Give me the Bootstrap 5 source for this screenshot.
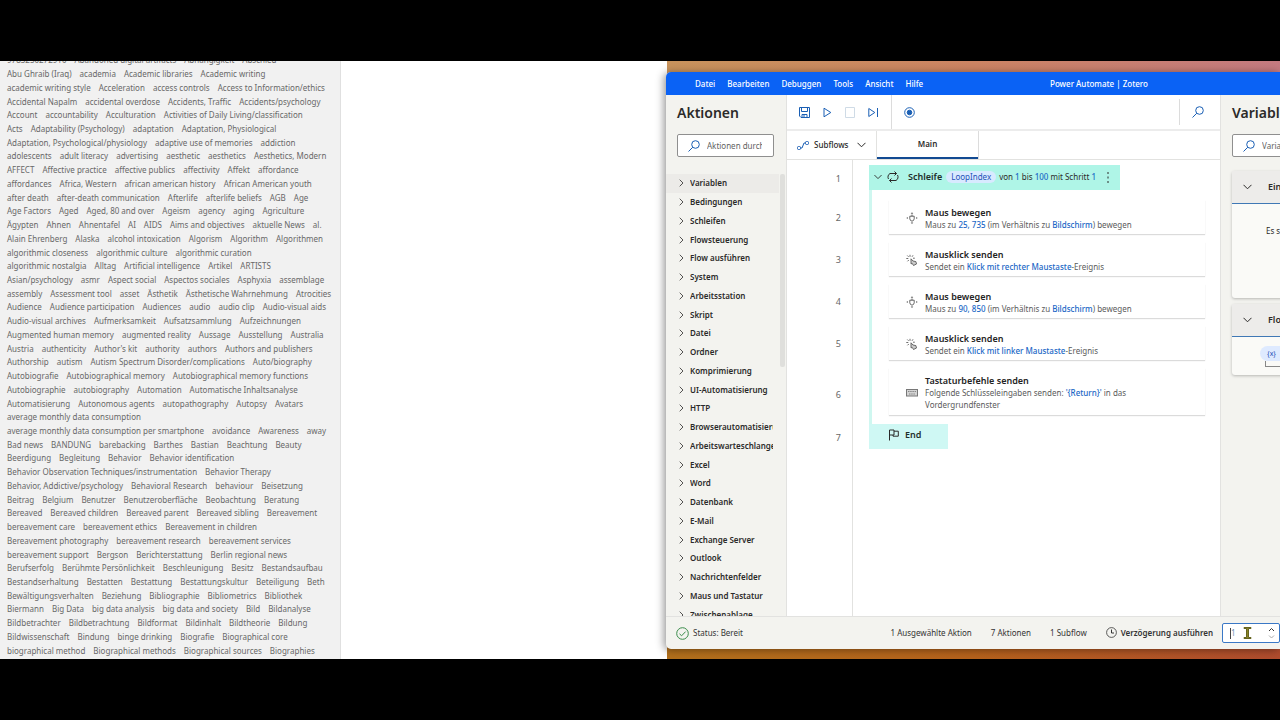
<!DOCTYPE html>
<html lang="de">
<head>
<meta charset="utf-8">
<meta name="viewport" content="width=device-width, initial-scale=1">
<title>Power Automate | Zotero</title>
<link href="https://cdn.jsdelivr.net/npm/bootstrap@5.3.0/dist/css/bootstrap.min.css" rel="stylesheet">
<style>
  :root { --ink: #2b2a29; --blue: #1a5fb4; --pane: #f3f3ef; --rule: #e2e2e0; }
  body { background: #000; font-family: "Noto Sans", "Open Sans", sans-serif; font-size: 8px; line-height: 12px; color: var(--ink); }
  svg { display: block; flex: none; fill: none; stroke: currentColor; }
  button { color: inherit; }
  .plain { border: 0; background: none; padding: 0; text-align: left; }
  .screen { height: 100vh; padding: 61px 0; }
  .semi { font-weight: 600; }
  .plain.ic, .ic { color: var(--blue); }

  /* Zotero tag selector */
  .tags-pane { flex: 0 0 341px; background: #f1f1f1; border-right: 1px solid #e0e0e0; color: #686868; }
  .tags { display: grid; grid-auto-rows: 1fr; margin: -8px 0 2px; padding-left: 7px; line-height: 13px; }
  .tags li { display: flex; gap: 8px; align-items: center; min-height: 0; white-space: nowrap; }
  .blank-pane { flex: 0 0 326px; }

  /* Desktop and flow designer window */
  .desk { background: linear-gradient(90deg, #c8935c, #cc8463 50%, #c47a80) top / 100% 50% no-repeat, linear-gradient(90deg, #b2701c, #b6621c 50%, #b04c2e) bottom / 100% 50% no-repeat; padding: 11px 0 10px; min-width: 0; }
  .win { margin-left: -1px; border-radius: 5px 0 0 5px; background: var(--pane); box-shadow: -2px 1px 9px rgba(0,0,0,.42); overflow: hidden; }
  .menubar { height: 23px; background: #0a62f5; color: #fff; font-weight: 500; display: grid; grid-template-columns: 1fr 96px 134px; align-items: center; padding-left: 29px; }
  .menubar nav { gap: 12px; }
  .menubar a { color: #fff; text-decoration: none; }
  .actions { flex: 0 0 121px; min-width: 0; border-right: 1px solid var(--rule); }
  .actions-top { padding: 0 12px 0 11px; }
  .pane-title { font-size: 14px; line-height: 20px; font-weight: 600; margin: 8px 0 0; white-space: nowrap; }
  .find { height: 23px; border: 1px solid #8f8f8f; border-radius: 2px; background: #fff; display: flex; align-items: center; gap: 7px; padding: 0 11px 0 10px; margin-top: 11px; }
  .find input { border: 0; outline: 0; background: none; padding: 0; min-width: 0; flex: 1; font-size: 8px; }
  .find input::placeholder { color: #626262; opacity: 1; }
  .tree-wrap { flex: 1 1 0; margin-top: 17px; }
  .tree { flex: 1 1 0; min-width: 0; min-height: 450px; display: grid; grid-template-columns: minmax(0, 1fr); grid-auto-rows: 1fr; font-weight: 600; }
  .tree button { width: 100%; height: 100%; display: flex; align-items: center; gap: 6px; padding: 0 6px 0 13px; font-weight: 600; }
  .tree span { flex: 1; min-width: 0; white-space: nowrap; overflow: hidden; }
  .tree svg { stroke-width: .8; }
  .tree li:first-child { background: #ecebe8; }
  .thumb { width: 5px; height: 193px; margin: 0 1px; border-radius: 2px; background: #dfdfdc; }

  .tools { height: 36px; border-bottom: 2px solid #ececec; display: flex; align-items: stretch; }
  .tool-set { gap: 13px; padding-left: 12px; width: 104px; }
  .tabs-row { height: 29px; border-bottom: 1px solid var(--rule); display: flex; }
  .subflows { width: 90px; border-right: 1px solid var(--rule); display: flex; align-items: center; gap: 5px; padding-left: 10px; font-weight: 500; }
  .main-tab { width: 101px; text-align: center; border-bottom: 2px solid #124a92; font-weight: 600; }
  .vline { width: 1px; background: #dcdcdc; }

  .step { display: flex; }
  .num { flex: 0 0 66px; border-right: 1px solid var(--rule); padding-right: 11px; display: flex; align-items: center; justify-content: flex-end; color: #686868; font-size: 9px; }
  .step-first { height: 37px; }
  .step-body { flex: 1; min-width: 0; margin-left: 16px; }
  .in-loop { border-left: 3px solid #cff7f0; padding: 3px 15px 5px 17px; }
  .step:last-child > .in-loop { padding-bottom: 9px; }
  .loop-head { background: #aff5e7; height: 25px; width: 251px; margin-top: 5px; padding: 0 8px 1px 5px; display: flex; align-items: center; white-space: nowrap; }
  .loop-gap { height: 7px; border-left: 3px solid #cff7f0; }
  .pill { background: #d8eaff; color: #2450b8; border-radius: 7px; padding: 0 5px; margin: 0 3px 0 4px; }
  .val { color: #1b68c6; font-weight: 500; }
  .step-card { min-height: 34px; box-shadow: 0 1px 1px rgba(0,0,0,.14); display: flex; align-items: center; gap: 7px; padding: 6px 12px 4px 17px; color: #5b5b5b; }
  .step-card.one-line { padding-top: 2px; padding-bottom: 0; white-space: nowrap; }
  .step-card h3 { font-size: 9px; line-height: 13px; font-weight: 600; color: #232323; margin: 0; }
  .step-card p { margin: 0; }
  .end-head { background: #cff8f4; width: 79px; height: 25px; display: flex; align-items: center; gap: 6px; padding: 0 0 3px 19px; }
  .name { font-size: 9px; font-weight: 600; color: #1e2f2c; }

  .vars { flex: 0 0 60px; border-left: 1px solid var(--rule); padding-left: 11px; overflow: hidden; }
  .vars-inner { width: 140px; }
  .var-box { border-radius: 3px; box-shadow: 0 1px 3px rgba(0,0,0,.25); background: #fafaf7; }
  .var-head { width: 100%; height: 33px; background: #edecea; border-bottom: 1px solid #3f78b5; display: flex; align-items: center; gap: 16px; padding-left: 11px; font-size: 9px; font-weight: 600; }
  .chip { background: #deeaff; border-radius: 8px; width: 70px; line-height: 15px; padding-left: 7px; color: #2450b8; font-size: 7px; }

  .status { height: 33px; border-top: 1px solid var(--rule); display: flex; align-items: center; white-space: nowrap; padding-left: 10px; color: #343434; }
  .status-counts { gap: 19px; }
  .delay { position: relative; width: 58px; height: 20px; border: 1px solid #3a78c6; border-radius: 2px; background: #fff; display: flex; align-items: center; justify-content: space-between; padding: 0 4px 0 7px; margin-left: 9px; }
  .delay input { border: 0; border-left: 1px solid #444; outline: 0; padding: 0; width: 14px; height: 11px; font-size: 8px; color: #6b8fb5; }
  .ibeam { position: absolute; left: 19px; top: 2px; }
</style>
</head>
<body>
<svg class="d-none">
  <symbol id="lens" viewBox="0 0 12 12"><circle cx="7.5" cy="4.5" r="3.8"/><path d="M4.8 7.2 0.5 11.5"/></symbol>
  <symbol id="right" viewBox="0 0 5 8"><path d="M.7 .7 4 4 .7 7.3"/></symbol>
  <symbol id="down" viewBox="0 0 9 6"><path d="M.5 .8 4.5 4.8 8.5 .8"/></symbol>
  <symbol id="move" viewBox="0 0 12 12"><path d="M3.800 4.200h4.400v2.600Q8 8.800 6 9.200 4 8.800 3.800 6.800zM6 2.500v1.700" stroke="#555"/><path d="M6 .3 7.300 1.800H4.700zM6 11.900 7.300 10.400H4.700zM.3 6 1.800 4.900v2.200zM11.700 6 10.200 4.900v2.200z" fill="currentColor" stroke="none"/></symbol>
  <symbol id="click" viewBox="0 0 12 12"><path d="M5 4.800v5l1.300-.3L7.500 11.500l3-1.500-.6-2.400L7 7z" fill="#ccc"/><path d="M4 .8v2M1.300 1.500 2.600 2.800M7 1.300 6 2.800M.3 4.500h2M2.800 6 1.500 7.300M7 4.200h1.800"/></symbol>
</svg>

<div class="screen d-flex overflow-hidden">
  <section class="tags-pane d-flex flex-column overflow-hidden">
    <ul class="tags list-unstyled flex-grow-1" id="tags"></ul>
  </section>
  <section class="blank-pane bg-white"></section>

  <main class="desk flex-grow-1 d-flex flex-column">
    <div class="win flex-grow-1 d-flex flex-column">
      <header class="menubar">
        <nav class="d-flex"><a href="#">Datei</a><a href="#">Bearbeiten</a><a href="#">Debuggen</a><a href="#">Tools</a><a href="#">Ansicht</a><a href="#">Hilfe</a></nav>
        <span class="text-nowrap">Power Automate | Zotero</span>
      </header>

      <div class="d-flex flex-grow-1 overflow-hidden">
        <aside class="actions d-flex flex-column">
          <div class="actions-top">
            <h1 class="pane-title">Aktionen</h1>
            <label class="find"><svg class="ic" width="12" height="12"><use href="#lens"/></svg><input type="text" placeholder="Aktionen durchsuchen" aria-label="Aktionen durchsuchen"></label>
          </div>
          <div class="tree-wrap d-flex overflow-hidden">
            <ul class="tree list-unstyled mb-0 align-self-start" id="tree"></ul>
            <div class="thumb"></div>
          </div>
        </aside>

        <section class="flex-grow-1 bg-white overflow-hidden d-flex flex-column">
          <div class="tools">
            <div class="tool-set d-flex align-items-center">
              <button class="plain ic" aria-label="Speichern"><svg width="11" height="11" viewBox="0 0 11 11"><path d="M.5.5h10v10H2L.5 9zM2.500.5v4h6v-4M3 10.500v-3h5v3M5 8v2"/></svg></button>
              <button class="plain ic" aria-label="Ausführen"><svg width="9" height="11" viewBox="0 0 9 11"><path d="M1 1.200 7.800 5.500 1 9.800z"/></svg></button>
              <button class="plain" style="color:#cfdbe6" aria-label="Anhalten"><svg width="10" height="11" viewBox="0 0 10 11"><path d="M.5.5h9v10h-9z"/></svg></button>
              <button class="plain ic" aria-label="Nächste Aktion"><svg width="10" height="11" viewBox="0 0 10 11"><path d="M.8 1.500 6.800 5.500l-6 4zM9.500 1v9"/></svg></button>
            </div>
            <div class="vline"></div>
            <button class="plain ic ps-2 ms-1" aria-label="Rekorder"><svg width="11" height="11" viewBox="0 0 11 11"><circle cx="5.500" cy="5.500" r="4.800"/><circle cx="5.500" cy="5.500" r="2.300" fill="currentColor"/></svg></button>
            <div class="vline ms-auto my-1"></div>
            <button class="plain ic ps-2 pe-3 ms-1" aria-label="Suchen"><svg width="12" height="12"><use href="#lens"/></svg></button>
          </div>
          <div class="tabs-row">
            <button class="plain subflows"><svg class="ic" width="12" height="9" viewBox="0 0 12 9"><rect x=".5" y="5.500" width="3" height="3" rx="1"/><rect x="8.500" y=".5" width="3" height="3" rx="1"/><path d="M3.500 7h1.500L7 2h1.500"/></svg>Subflows<svg class="ms-1" width="9" height="6"><use href="#down"/></svg></button>
            <button class="plain main-tab">Main</button>
            <div class="vline"></div>
          </div>

          <div class="flex-grow-1 d-flex flex-column">
            <div class="step step-first"><div class="num">1</div>
              <div class="step-body">
                <div class="loop-head"><svg width="8" height="6"><use href="#down"/></svg><svg class="ms-1 me-1" width="14" height="12" viewBox="0 0 14 12"><path d="M2.500 8A4 4 0 0 1 4 2.500h6.500M8.500.5l2 2-2 2M11.500 4a4 4 0 0 1-1.500 5.500H3.500M5.500 7.500l-2 2 2 2"/></svg><span class="name ps-1">Schleife</span><span class="pill">LoopIndex</span><span>von <a class="val text-decoration-none" href="#">1</a> bis <a class="val text-decoration-none" href="#">100</a> mit Schritt <a class="val text-decoration-none" href="#">1</a></span><button class="plain ms-auto" aria-label="Mehr"><svg width="8" height="12" viewBox="0 0 8 12"><path d="M4 1v2M4 5.500v2M4 10v2"/></svg></button></div>
                <div class="loop-gap"></div></div></div>
            <div id="steps"></div>
            <div class="step flex-grow-1"><div class="num align-items-start pt-2">7</div>
              <div class="step-body"><div class="end-head"><svg width="11" height="12" viewBox="0 0 11 12"><path d="M1.500 11.500V1h4.500v5H1.500M6 2.200h4.300v5H5V6"/></svg><span class="name">End</span></div></div></div>
          </div>
        </section>

        <aside class="vars">
          <div class="vars-inner">
            <h2 class="pane-title">Variablen</h2>
            <label class="find"><svg class="ic" width="12" height="12"><use href="#lens"/></svg><input type="text" placeholder="Variablen durchsuchen" aria-label="Variablen durchsuchen"></label>
            <div class="var-box" style="margin-top:14px">
              <button class="plain var-head"><svg width="9" height="6"><use href="#down"/></svg>Ein-/Ausgabevariablen</button>
              <div class="text-nowrap" style="height:94px;padding:21px 0 0 34px">Es sind keine vorhanden</div>
            </div>
            <div class="var-box" style="margin-top:6px">
              <button class="plain var-head"><svg width="9" height="6"><use href="#down"/></svg>Flowvariablen</button>
              <div class="pb-2" style="padding:9px 0 0 28px"><div class="chip">{x}</div><div style="height:6px;margin:0 10px 0 5px;border:solid #888;border-width:0 0 1px 1px"></div></div>
            </div>
          </div>
        </aside>
      </div>

      <footer class="status">
        <svg width="13" height="13" viewBox="0 0 13 13" style="color:#3a8c4a"><circle cx="6.500" cy="6.500" r="5.800"/><path d="M3.500 6.800 5.600 8.800 9.600 4.600"/></svg>
        <span class="ms-1">Status: Bereit</span>
        <div class="status-counts d-flex ms-auto"><span>1 Ausgewählte Aktion</span><span>7 Aktionen</span><span>1 Subflow</span><svg width="11" height="11" viewBox="0 0 11 11"><circle cx="5.500" cy="5.500" r="4.900" stroke-width=".8"/><path d="M5.500 2.500v3.500h2.500"/></svg></div>
        <label class="semi ps-1" for="delay">Verzögerung ausführen</label>
        <div class="delay">
          <input id="delay" type="text" value="1">
          <svg width="7" height="12" viewBox="0 0 7 12"><path d="M1 4 3.500 1.500 6 4"/><path d="M1 8.500 3.500 11 6 8.500" stroke="#aaa"/></svg>
          <svg class="ibeam" width="11" height="14" viewBox="0 0 11 14"><path d="M2 1.500h7v1H6.500v9H9v1H2v-1h2.500v-9H2z" fill="#8a8426" stroke="#66641f"/></svg>
        </div>
      </footer>
    </div>
  </main>
</div>

<script>
const tagRows = `9783250272910|Abandoned digital artifacts|Abhängigkeit|Abschied
Abu Ghraib (Iraq)|academia|Academic libraries|Academic writing
academic writing style|Acceleration|access controls|Access to Information/ethics
Accidental Napalm|accidental overdose|Accidents, Traffic|Accidents/psychology
Account|accountability|Acculturation|Activities of Daily Living/classification
Acts|Adaptability (Psychology)|adaptation|Adaptation, Physiological
Adaptation, Psychological/physiology|adaptive use of memories|addiction
adolescents|adult literacy|advertising|aesthetic|aesthetics|Aesthetics, Modern
AFFECT|Affective practice|affective publics|affectivity|Affekt|affordance
affordances|Africa, Western|african american history|African American youth
after death|after-death communication|Afterlife|afterlife beliefs|AGB|Age
Age Factors|Aged|Aged, 80 and over|Ageism|agency|aging|Agriculture
Ägypten|Ahnen|Ahnentafel|AI|AIDS|Aims and objectives|aktuelle News|al.
Alain Ehrenberg|Alaska|alcohol intoxication|Algorism|Algorithm|Algorithmen
algorithmic closeness|algorithmic culture|algorithmic curation
algorithmic nostalgia|Alltag|Artificial intelligence|Artikel|ARTISTS
Asian/psychology|asmr|Aspect social|Aspectos sociales|Asphyxia|assemblage
assembly|Assessment tool|asset|Ästhetik|Ästhetische Wahrnehmung|Atrocities
Audience|Audience participation|Audiences|audio|audio clip|Audio-visual aids
Audio-visual archives|Aufmerksamkeit|Aufsatzsammlung|Aufzeichnungen
Augmented human memory|augmented reality|Aussage|Ausstellung|Australia
Austria|authenticity|Author's kit|authority|authors|Authors and publishers
Authorship|autism|Autism Spectrum Disorder/complications|Auto/biography
Autobiografie|Autobiographical memory|Autobiographical memory functions
Autobiographie|autobiography|Automation|Automatische Inhaltsanalyse
Automatisierung|Autonomous agents|autopathography|Autopsy|Avatars
average monthly data consumption
average monthly data consumption per smartphone|avoidance|Awareness|away
Bad news|BANDUNG|barebacking|Barthes|Bastian|Beachtung|Beauty
Beerdigung|Begleitung|Behavior|Behavior identification
Behavior Observation Techniques/instrumentation|Behavior Therapy
Behavior, Addictive/psychology|Behavioral Research|behaviour|Beisetzung
Beitrag|Belgium|Benutzer|Benutzeroberfläche|Beobachtung|Beratung
Bereaved|Bereaved children|Bereaved parent|Bereaved sibling|Bereavement
bereavement care|bereavement ethics|Bereavement in children
Bereavement photography|bereavement research|bereavement services
bereavement support|Bergson|Berichterstattung|Berlin regional news
Berufserfolg|Berühmte Persönlichkeit|Beschleunigung|Besitz|Bestandsaufbau
Bestandserhaltung|Bestatten|Bestattung|Bestattungskultur|Beteiligung|Beth
Bewältigungsverhalten|Beziehung|Bibliographie|Bibliometrics|Bibliothek
Biermann|Big Data|big data analysis|big data and society|Bild|Bildanalyse
Bildbetrachter|Bildbetrachtung|Bildformat|Bildinhalt|Bildtheorie|Bildung
Bildwissenschaft|Bindung|binge drinking|Biografie|Biographical core
biographical method|Biographical methods|Biographical sources|Biographies`;
document.getElementById('tags').innerHTML = tagRows.split('\n').map(r =>
  '<li>' + r.split('|').map(t => `<button class="plain">${t}</button>`).join('') + '</li>').join('');

const groups = ['Variablen','Bedingungen','Schleifen','Flowsteuerung','Flow ausführen','System','Arbeitsstation','Skript','Datei','Ordner','Komprimierung','UI-Automatisierung','HTTP','Browserautomatisierung','Arbeitswarteschlangen','Excel','Word','Datenbank','E-Mail','Exchange Server','Outlook','Nachrichtenfelder','Maus und Tastatur','Zwischenablage'];
document.getElementById('tree').innerHTML = groups.map(g =>
  `<li><button class="plain"><svg width="5" height="8"><use href="#right"/></svg><span>${g}</span></button></li>`).join('');

const icon = {
  move: '<svg width="12" height="12" stroke-width=".9"><use href="#move"/></svg>',
  click: '<svg width="12" height="12" stroke-width=".9"><use href="#click"/></svg>',
  keys: '<svg width="12" height="8" viewBox="0 0 12 8"><rect x=".5" y=".5" width="11" height="6.500" fill="#d4d4d4" stroke="#777"/><path d="M2 2.500h8M3 5h6" stroke="#888" stroke-dasharray="1.500 .7"/></svg>'
};
const v = t => `<a class="val text-decoration-none" href="#">${t}</a>`;
const steps = [
  ['move', 'Maus bewegen', `Maus zu ${v('25, 735')} (im Verhältnis zu ${v('Bildschirm')}) bewegen`],
  ['click', 'Mausklick senden', `Sendet ein ${v('Klick mit rechter Maustaste')}-Ereignis`],
  ['move', 'Maus bewegen', `Maus zu ${v('90, 850')} (im Verhältnis zu ${v('Bildschirm')}) bewegen`],
  ['click', 'Mausklick senden', `Sendet ein ${v('Klick mit linker Maustaste')}-Ereignis`],
  ['keys', 'Tastaturbefehle senden', `Folgende Schlüsseleingaben senden: ${v("'{Return}'")} in das<br>Vordergrundfenster`]
];
document.getElementById('steps').innerHTML = steps.map(([i, h, p], n) =>
  `<div class="step"><div class="num">${n + 2}</div><div class="step-body in-loop"><div class="step-card${i === 'keys' ? '' : ' one-line'}">${icon[i]}<div><h3>${h}</h3><p>${p}</p></div></div></div></div>`).join('');
</script>
<script src="https://cdn.jsdelivr.net/npm/bootstrap@5.3.0/dist/js/bootstrap.bundle.min.js"></script>
</body>
</html>
